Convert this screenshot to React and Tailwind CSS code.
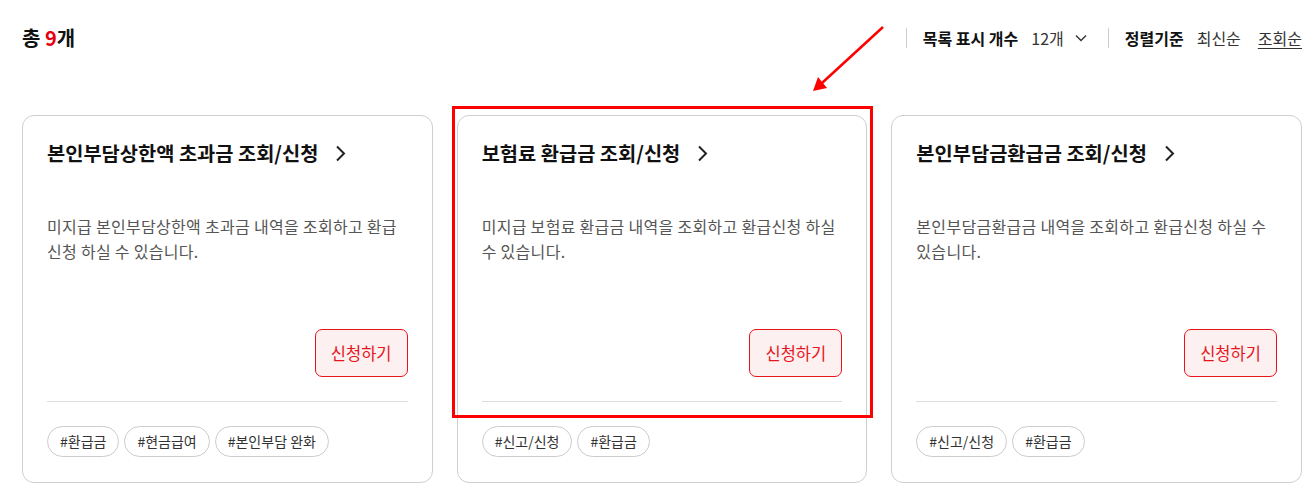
import React from "react";

const FONT = { fontFamily: '"Noto Sans CJK KR", "Noto Sans", sans-serif' };

const cards = [
  {
    title: "본인부담상한액 초과금 조회/신청",
    desc: "미지급 본인부담상한액 초과금 내역을 조회하고 환급 신청 하실 수 있습니다.",
    tags: ["#환급금", "#현금급여", "#본인부담 완화"],
  },
  {
    title: "보험료 환급금 조회/신청",
    desc: "미지급 보험료 환급금 내역을 조회하고 환급신청 하실 수 있습니다.",
    tags: ["#신고/신청", "#환급금"],
  },
  {
    title: "본인부담금환급금 조회/신청",
    desc: "본인부담금환급금 내역을 조회하고 환급신청 하실 수 있습니다.",
    tags: ["#신고/신청", "#환급금"],
  },
];

function Chevron() {
  return (
    <svg width="11" height="17" viewBox="0 0 11 17" className="ml-[17px] shrink-0">
      <path d="M2 1.5 L9 8.5 L2 15.5" fill="none" stroke="#222" strokeWidth="2" />
    </svg>
  );
}

function Card({ title, desc, tags }) {
  return (
    <div className="flex h-[368px] w-[411px] flex-col rounded-[12px] border border-[#cfcfcf] bg-white px-[24px] pb-[25px] pt-[24px]">
      <div className="flex h-[26px] items-center">
        <span className="text-[19.8px] font-bold leading-[26px] text-[#111]">{title}</span>
        <Chevron />
      </div>
      <p className="mt-[48px] break-keep text-[16px] leading-[25px] tracking-[0.3px] text-[#555]">{desc}</p>
      <div className="flex-1" />
      <div className="flex justify-end">
        <button className="h-[48px] w-[93px] rounded-[7px] border border-[#e8141c] bg-[#fdf0f0] text-[16.5px] text-[#e8141c]">
          신청하기
        </button>
      </div>
      <div className="mt-[24px] h-px bg-[#dcdcdc]" />
      <div className="mt-[24px] flex gap-[5px]">
        {tags.map((t) => (
          <span
            key={t}
            className="flex h-[31px] items-center rounded-full border border-[#cccccc] px-[12px] text-[14px] text-[#333]"
          >
            {t}
          </span>
        ))}
      </div>
    </div>
  );
}

export default function App() {
  return (
    <div className="relative h-[496px] w-[1312px] overflow-hidden bg-white" style={FONT}>
      <div className="ml-[22px] w-[1280px]">
        <div className="mt-[18px] flex h-[40px] items-center justify-between">
          <div className="text-[20px] font-bold text-[#111]">
            총 <span className="text-[#e60012]">9</span>개
          </div>
          <div className="flex items-center text-[16px] text-[#333]">
            <div className="h-[20px] w-px bg-[#cccccc]" />
            <span className="ml-[16px] font-bold text-[#111]">목록 표시 개수</span>
            <span className="ml-[13px]">12개</span>
            <svg width="12" height="8" viewBox="0 0 12 8" className="ml-[11px]">
              <path d="M1 1.5 L6 6.5 L11 1.5" fill="none" stroke="#333" strokeWidth="1.4" />
            </svg>
            <div className="ml-[21px] h-[20px] w-px bg-[#cccccc]" />
            <span className="ml-[16px] font-bold text-[#111]">정렬기준</span>
            <span className="ml-[13px]">최신순</span>
            <span className="ml-[17px] underline underline-offset-[3px]">조회순</span>
          </div>
        </div>
        <div className="mt-[57px] flex gap-[24px]">
          {cards.map((c) => (
            <Card key={c.title} {...c} />
          ))}
        </div>
      </div>

      {/* annotation overlay */}
      <div className="pointer-events-none absolute left-[452px] top-[106px] h-[312px] w-[421px] border-[3px] border-[#ff0000]" />
      <svg
        className="pointer-events-none absolute left-0 top-0"
        width="1312"
        height="496"
        viewBox="0 0 1312 496"
      >
        <line x1="883" y1="27" x2="822" y2="83" stroke="#ff0000" strokeWidth="2.5" />
        <polygon points="813,91 818,77 827,88" fill="#ff0000" />
      </svg>
    </div>
  );
}
